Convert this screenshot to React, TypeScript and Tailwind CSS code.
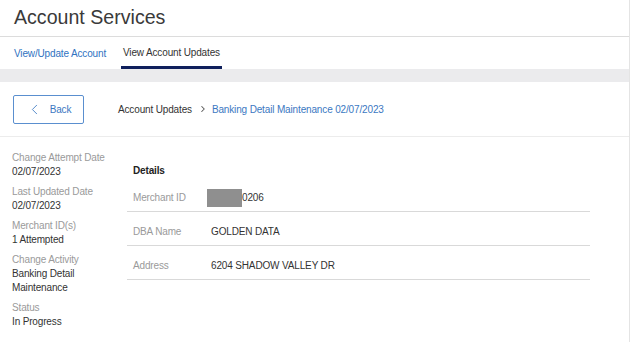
import { ChevronLeft, ChevronRight } from "lucide-react";

const summary = [
  { label: "Change Attempt Date", value: ["02/07/2023"] },
  { label: "Last Updated Date", value: ["02/07/2023"] },
  { label: "Merchant ID(s)", value: ["1 Attempted"] },
  { label: "Change Activity", value: ["Banking Detail", "Maintenance"] },
  { label: "Status", value: ["In Progress"] },
];

function DetailRow({ label, children }: { label: string; children: React.ReactNode }) {
  return (
    <div className="flex items-center border-b border-[#d9d9d9] pt-[13px] pb-[6px] pl-[6px] leading-[14px]">
      <span className="w-[78px] text-[#9a9a9a]">{label}</span>
      <span className="text-[#333]">{children}</span>
    </div>
  );
}

export default function App() {
  return (
    <div
      className="w-[630px] min-h-[342px] border-r border-[#e4e4e4] bg-white text-[10px] tracking-[-0.15px] text-[#333]"
      style={{ fontFamily: '"Liberation Sans", Arial, sans-serif' }}
    >
      <header className="h-[37px] border-b border-[#dcdcdc] px-[14px] pt-[5px]">
        <h1 className="text-[19.6px] leading-[24px] tracking-normal text-[#3a3a3a]">Account Services</h1>
      </header>

      <nav className="flex h-[32px] items-stretch pl-[14px]">
        <a className="flex items-center text-[#2f72bf]">View/Update Account</a>
        <div className="ml-[15px] flex items-center border-b-[3px] border-[#0f1f5c] px-[2px] pt-[2px] text-[#333]">
          View Account Updates
        </div>
      </nav>

      <div className="h-[13px] bg-[#ebebed]" />

      <div className="flex h-[55px] items-center border-b border-[#ececec] pl-[13px]">
        <button className="flex h-[29px] w-[71px] items-center justify-center gap-[7px] rounded-[2px] border border-[#5a8fcf] text-[#3b78c2]">
          <ChevronLeft className="size-[17px]" strokeWidth={1.2} />
          Back
        </button>
        <div className="ml-[34px] flex items-center text-[#333]">
          <span>Account Updates</span>
          <ChevronRight className="mx-[4px] ml-[6px] size-[10px] text-[#555]" strokeWidth={2.5} />
          <span className="text-[#3b78c2]">Banking Detail Maintenance 02/07/2023</span>
        </div>
      </div>

      <div className="flex">
        <aside className="w-[127px] pl-[12px] pt-[13px]">
          {summary.map((s) => (
            <div key={s.label} className="mb-[5px]">
              <div className="leading-[15px] text-[#9a9a9a]">{s.label}</div>
              {s.value.map((v) => (
                <div key={v} className="leading-[14px] text-[#333]">
                  {v}
                </div>
              ))}
            </div>
          ))}
        </aside>

        <section className="w-[463px] pt-[27px]">
          <h2 className="pl-[6px] font-bold leading-[14px] text-[#222]">Details</h2>
          <DetailRow label="Merchant ID">
            <span className="flex items-center">
              <span className="my-[-2px] ml-[-4px] inline-block h-[18px] w-[35px] bg-[#8f8f8f]" />
              0206
            </span>
          </DetailRow>
          <DetailRow label="DBA Name">GOLDEN DATA</DetailRow>
          <DetailRow label="Address">6204 SHADOW VALLEY DR</DetailRow>
        </section>
      </div>
    </div>
  );
}
